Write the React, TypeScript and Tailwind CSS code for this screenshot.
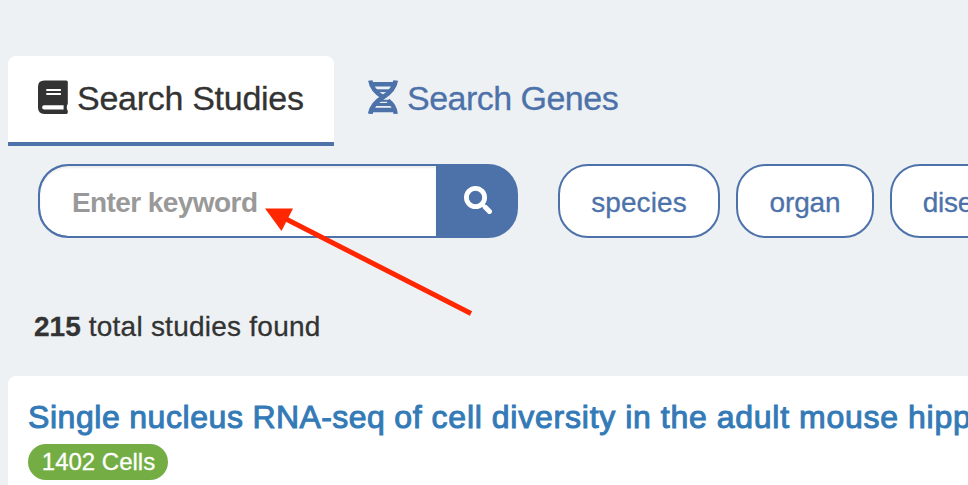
const facets = [
  { name: "species", width: "w-[162px]", spacing: "tracking-[0.1px]" },
  { name: "organ", width: "w-[138px]", spacing: "tracking-[-0.1px]" },
  { name: "disease", width: "w-[160px]", spacing: "tracking-[-0.3px]" },
];

function BookIcon() {
  return (
    <svg className="mt-[6px] h-[34px] w-[30px] shrink-0" viewBox="0 0 30 34" fill="currentColor">
      <path d="M6.300.5H28.400Q29.800 .5 29.800 2.100V23.500Q29.800 24.600 29 25.200Q28.500 27 29 29.400Q29.800 30 29.800 31V32.200Q29.800 33.900 28.400 33.900H6.300Q0 33.900 0 27.600V6.800Q0 .5 6.300.5Z" />
      <path
        fill="#fff"
        d="M8.300 9H22.900V11H8.300ZM8.300 13H22.900V15H8.300ZM6.200 25.300H25.600V29.600H6.200Q4.100 29.600 4.100 27.450Q4.100 25.300 6.200 25.300Z"
      />
    </svg>
  );
}

function DnaIcon() {
  return (
    <svg className="mt-[6px] h-[34px] w-[30px] shrink-0" viewBox="0 0 30 34" fill="none" stroke="currentColor">
      <path strokeWidth="4.400" d="M2.300.5C3.500 8.500 9 13.500 15 17.200" />
      <path strokeWidth="4.800" d="M27.700.5C26.500 8.500 21 13.500 15 17.200C9 20.800 3.500 25.500 2.300 33.900" />
      <path strokeWidth="4.400" d="M20 20.500C24 23.500 27 27 27.700 33.900" />
      <path strokeWidth="4.600" d="M3 4.300H27M3 30H27" />
      <path strokeWidth="2.800" d="M7 10.700H23" />
      <path strokeWidth="3" d="M6 24.500H23" />
      <path strokeWidth="2" d="M11 20.800H22" />
    </svg>
  );
}

function SearchIcon() {
  return (
    <svg className="h-[28px] w-[28px]" viewBox="0 0 28 28" fill="none" stroke="currentColor">
      <circle cx="11.500" cy="11.500" r="9.100" strokeWidth="4.800" />
      <path d="M17.500 17.500L22 22" strokeWidth="3.600" />
      <path d="M21.300 21.300L25.500 25.500" strokeWidth="5" strokeLinecap="round" />
    </svg>
  );
}

function Tabs() {
  return (
    <nav className="flex pl-2 text-[34px] leading-[48px]">
      <a className="flex h-[90px] w-[326px] items-start rounded-t-[8px] border-b-4 border-[#4d72aa] bg-white pl-[30px] pt-[18px] text-[#333333]">
        <BookIcon />
        <span className="ml-[9px] whitespace-nowrap tracking-[-0.28px] [-webkit-text-stroke:0.3px_#333333]">Search Studies</span>
      </a>
      <a className="flex items-start pl-[34px] pt-[18px] text-[#4d72aa]">
        <DnaIcon />
        <span className="ml-[9px] whitespace-nowrap tracking-[-0.52px] [-webkit-text-stroke:0.3px_#4d72aa]">Search Genes</span>
      </a>
    </nav>
  );
}

function SearchBar() {
  return (
    <div className="mt-[18px] flex h-[74px] pl-[38px]">
      <div className="flex w-[480px] shrink-0 overflow-hidden rounded-[30px] border-2 border-[#4d72aa] bg-[#4d72aa]">
        <input
          placeholder="Enter keyword"
          className="w-[396px] rounded-l-[28px] bg-white pl-[32px] pt-[3px] text-[28px] font-bold tracking-[-0.58px] shadow-[inset_0_2px_2px_rgba(0,0,0,0.075)] outline-none placeholder:text-[#999999]"
        />
        <button className="flex flex-1 items-center justify-center pb-[2px] pl-[4px] text-white">
          <SearchIcon />
        </button>
      </div>
      <div className="ml-10 flex gap-4">
        {facets.map((f) => (
          <button
            key={f.name}
            className={`${f.width} ${f.spacing} shrink-0 rounded-[30px] border-2 border-[#4d72aa] bg-white pt-[3px] text-[28px] text-[#4d72aa] [-webkit-text-stroke:0.3px_#4d72aa]`}
          >
            {f.name}
          </button>
        ))}
      </div>
    </div>
  );
}

function Arrow() {
  return (
    <svg className="pointer-events-none absolute left-0 top-0" width="968" height="485" viewBox="0 0 968 485">
      <path d="M285 218.500L471 313.500" stroke="#ff2600" strokeWidth="5" />
      <path d="M265 208.500H293L281.500 231Z" fill="#ff2600" />
    </svg>
  );
}

export default function App() {
  return (
    <div className="relative h-[485px] w-[968px] overflow-hidden bg-[#edf1f4] pt-14 font-['Liberation_Sans',Arial,sans-serif]">
      <Tabs />
      <SearchBar />
      <p className="mt-[69px] pl-[34px] text-[28px] leading-[40px] tracking-[0.24px] text-[#333333] [-webkit-text-stroke:0.3px_#333333]">
        <strong className="tracking-normal">215</strong> total studies found
      </p>
      <article className="ml-2 mt-[29px] h-[140px] rounded-tl-[8px] bg-white pl-5 pt-[23px]">
        <h3 className="whitespace-nowrap text-[32px] leading-[36px] tracking-[0.78px] text-[#337ab7] [word-spacing:-0.6px] [-webkit-text-stroke:1px_#337ab7]">
          <span className="tracking-[0.57px]">Single nucleus </span>
          <span className="tracking-[0.42px]">RNA-seq</span> of cell diversity in the adult mouse hippocampus
        </h3>
        <span className="mt-[9px] flex h-9 w-[140px] items-center justify-center rounded-full bg-[#73ad43] pl-px text-[24px] text-white [-webkit-text-stroke:0.3px_white]">
          1402 Cells
        </span>
      </article>
      <Arrow />
    </div>
  );
}
